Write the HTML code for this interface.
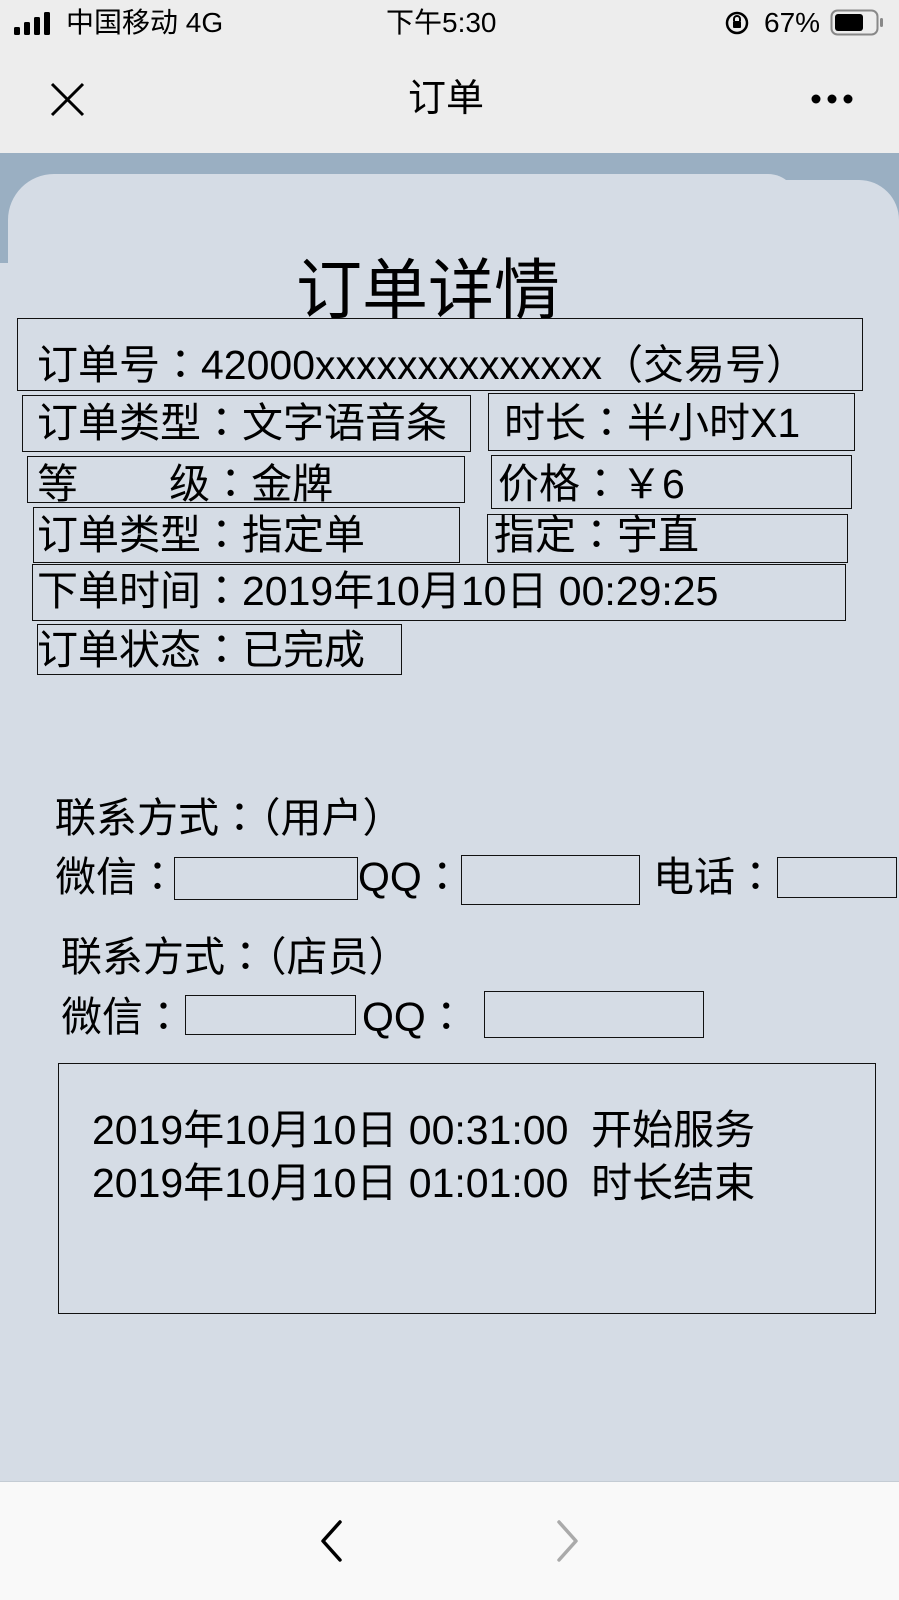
<!DOCTYPE html>
<html><head><meta charset="utf-8"><style>
*{margin:0;padding:0;box-sizing:border-box}
body{width:899px;height:1600px;position:relative;overflow:hidden;background:#d5dce5;font-family:"Liberation Sans","Noto Sans CJK TC",sans-serif;color:#000}
.a{position:absolute;white-space:nowrap;line-height:1}
.b{position:absolute;border:1.3px solid #111}
.t{font-size:41px;top:0}
</style></head><body>
<div class="a" style="left:0;top:0;width:899px;height:153px;background:#ededed"></div>
<svg class="a" style="left:14px;top:12px" width="42" height="24"><rect x="0" y="15" width="6" height="8" rx="1.5"/><rect x="10" y="10" width="6" height="13" rx="1.5"/><rect x="20" y="5" width="6" height="18" rx="1.5"/><rect x="30" y="0" width="6" height="23" rx="1.5"/></svg>
<div class="a" style="left:66px;top:9px;font-size:28px">中国移动 4G</div>
<div class="a" style="left:386px;top:9px;font-size:28px">下午5:30</div>
<svg class="a" style="left:724px;top:10px" width="26" height="26"><circle cx="13" cy="13" r="10" fill="none" stroke="#000" stroke-width="2.5"/><rect x="9" y="11" width="8" height="7" rx="1"/><path d="M10 11v-2a3 3 0 0 1 6 0v2" fill="none" stroke="#000" stroke-width="2"/></svg>
<div class="a" style="left:764px;top:9px;font-size:28px">67%</div>
<svg class="a" style="left:830px;top:9px" width="55" height="28"><rect x="1.5" y="1.5" width="46" height="24" rx="6" fill="none" stroke="#888" stroke-width="2"/><rect x="5" y="5" width="28" height="17" rx="3"/><rect x="50" y="9" width="3" height="9" rx="1.5" fill="#888"/></svg>
<svg class="a" style="left:50px;top:82px" width="36" height="36"><path d="M2 2L33 33M33 2L2 33" stroke="#000" stroke-width="3"/></svg>
<div class="a" style="left:408px;top:80px;font-size:38px">订单</div>
<svg class="a" style="left:810px;top:93px" width="50" height="12"><circle cx="6" cy="6" r="4.5"/><circle cx="22" cy="6" r="4.5"/><circle cx="38" cy="6" r="4.5"/></svg>
<div class="a" style="left:0;top:153px;width:899px;height:110px;background:#9aafc2"></div>
<div class="a" style="left:8px;top:174px;width:790px;height:140px;background:#d5dce5;border-radius:46px 30px 0 0"></div>
<div class="a" style="left:700px;top:180px;width:199px;height:140px;background:#d5dce5;border-radius:0 40px 0 0"></div>
<div class="a" style="left:296px;top:257px;font-size:66px">订单详情</div>
<div class="b" style="left:17px;top:318px;width:846px;height:73px"></div>
<div class="a t" style="left:37px;top:345px">订单号：42000xxxxxxxxxxxxxx（交易号）</div>
<div class="b" style="left:22px;top:395px;width:449px;height:57px"></div>
<div class="a t" style="left:37px;top:403px">订单类型：文字语音条</div>
<div class="b" style="left:488px;top:393px;width:367px;height:58px"></div>
<div class="a t" style="left:504px;top:403px">时长：半小时X1</div>
<div class="b" style="left:27px;top:456px;width:438px;height:47px"></div>
<div class="a t" style="left:37px;top:464px">等&nbsp;&nbsp;&nbsp;&nbsp;&nbsp;&nbsp;&nbsp;&nbsp;级：金牌</div>
<div class="b" style="left:491px;top:455px;width:361px;height:54px"></div>
<div class="a t" style="left:498px;top:464px">价格：￥6</div>
<div class="b" style="left:33px;top:507px;width:427px;height:56px"></div>
<div class="a t" style="left:37px;top:515px">订单类型：指定单</div>
<div class="b" style="left:487px;top:514px;width:361px;height:49px"></div>
<div class="a t" style="left:494px;top:515px">指定：宇直</div>
<div class="b" style="left:32px;top:564px;width:814px;height:57px"></div>
<div class="a t" style="left:37px;top:571px">下单时间：2019年10月10日 00:29:25</div>
<div class="b" style="left:37px;top:624px;width:365px;height:51px"></div>
<div class="a t" style="left:37px;top:630px">订单状态：已完成</div>
<div class="a t" style="left:55px;top:798px">联系方式：（用户）</div>
<div class="a t" style="left:55px;top:857px">微信：</div>
<div class="b" style="left:174px;top:857px;width:184px;height:43px"></div>
<div class="a t" style="left:358px;top:857px">QQ：</div>
<div class="b" style="left:461px;top:855px;width:179px;height:50px"></div>
<div class="a t" style="left:653px;top:857px">电话：</div>
<div class="b" style="left:777px;top:857px;width:120px;height:41px"></div>
<div class="a t" style="left:61px;top:937px">联系方式：（店员）</div>
<div class="a t" style="left:61px;top:997px">微信：</div>
<div class="b" style="left:185px;top:995px;width:171px;height:40px"></div>
<div class="a t" style="left:362px;top:997px">QQ：</div>
<div class="b" style="left:484px;top:991px;width:220px;height:47px"></div>
<div class="b" style="left:58px;top:1063px;width:818px;height:251px"></div>
<div class="a" style="left:92px;top:1110px;font-size:41px">2019年10月10日 00:31:00&nbsp;&nbsp;开始服务</div>
<div class="a" style="left:92px;top:1163px;font-size:41px">2019年10月10日 01:01:00&nbsp;&nbsp;时长结束</div>
<div class="a" style="left:0;top:1481px;width:899px;height:119px;background:#f9f9f9;border-top:1.5px solid #c4ccd4"></div>
<svg class="a" style="left:315px;top:1518px" width="30" height="46"><path d="M25 4L8 23L25 42" fill="none" stroke="#000" stroke-width="3.5" stroke-linecap="round" stroke-linejoin="round"/></svg>
<svg class="a" style="left:554px;top:1518px" width="30" height="46"><path d="M5 4L22 23L5 42" fill="none" stroke="#aaa" stroke-width="3.5" stroke-linecap="round" stroke-linejoin="round"/></svg>
</body></html>
